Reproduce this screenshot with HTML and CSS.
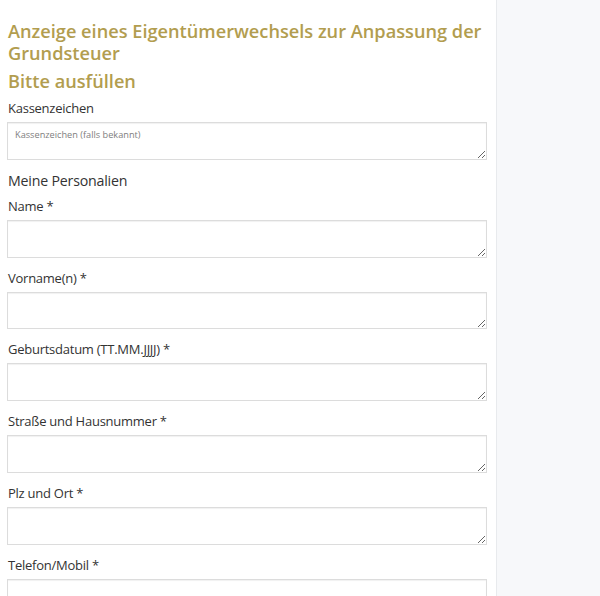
FILE: index.html
```html
<!DOCTYPE html>
<html lang="de">
<head>
<meta charset="utf-8">
<title>Anzeige eines Eigentümerwechsels</title>
<link rel="stylesheet" href="styles.css">
</head>
<body>
<div class="page">
  <main class="content">
    <h1 class="title">Anzeige eines Eigentümerwechsels zur Anpassung der Grundsteuer</h1>
    <h2 class="subtitle">Bitte ausfüllen</h2>
    <form class="form">
      <label class="field">
        <span class="label">Kassenzeichen</span>
        <textarea class="input" placeholder="Kassenzeichen (falls bekannt)"></textarea>
      </label>
      <h3 class="section">Meine Personalien</h3>
      <label class="field">
        <span class="label">Name *</span>
        <textarea class="input"></textarea>
      </label>
      <label class="field">
        <span class="label">Vorname(n) *</span>
        <textarea class="input"></textarea>
      </label>
      <label class="field">
        <span class="label">Geburtsdatum (TT.MM.JJJJ) *</span>
        <textarea class="input"></textarea>
      </label>
      <label class="field">
        <span class="label">Straße und Hausnummer *</span>
        <textarea class="input"></textarea>
      </label>
      <label class="field">
        <span class="label">Plz und Ort *</span>
        <textarea class="input"></textarea>
      </label>
      <label class="field">
        <span class="label">Telefon/Mobil *</span>
        <textarea class="input"></textarea>
      </label>
    </form>
  </main>
  <aside class="sidebar"></aside>
</div>
</body>
</html>
```

FILE: styles.css
```css
html, body {
  margin: 0;
  padding: 0;
  height: 100%;
  overflow: hidden;
}

body {
  font-family: "Open Sans", "Noto Sans", sans-serif;
  color: #333;
  background: #fff;
}

.page {
  display: flex;
  min-height: 100%;
}

.content {
  width: 497px;
  box-sizing: border-box;
  padding: 20px 9px 0 7px;
  border-right: 1px solid #e8eaed;
}

.sidebar {
  flex: 1;
  background: #f7f8fa;
}

.title,
.subtitle {
  font-size: 18.2px;
  line-height: 22px;
  font-weight: 600;
  color: #b29d4f;
}

.title {
  margin: 0 0 0 1px;
}

.subtitle {
  margin: 6px 0 0 1px;
}

.form {
  display: flex;
  flex-direction: column;
  margin-top: 6px;
}

.field {
  display: flex;
  flex-direction: column;
  gap: 4px;
  height: 61.75px;
  margin-bottom: 10px;
}

.label {
  display: block;
  height: 20px;
  font-size: 13px;
  line-height: 20px;
  letter-spacing: -0.25px;
  padding-left: 1px;
}

.section {
  margin: 0 0 4px 1px;
  font-size: 14.2px;
  line-height: 22px;
  letter-spacing: -0.2px;
  font-weight: 400;
  color: #333;
}

.input {
  display: block;
  flex: none;
  width: 100%;
  height: 37.75px;
  box-sizing: border-box;
  margin: 0;
  padding: 5px 7px;
  border: 1px solid #dcdcdc;
  border-radius: 0;
  box-shadow: inset 0 1px 1px rgba(0, 0, 0, 0.06);
  font-family: "Open Sans", "Noto Sans", sans-serif;
  font-size: 9.2px;
  line-height: 14px;
  color: #555;
  background: #fff;
  resize: vertical;
}

.input::placeholder {
  color: #808080;
}
```
